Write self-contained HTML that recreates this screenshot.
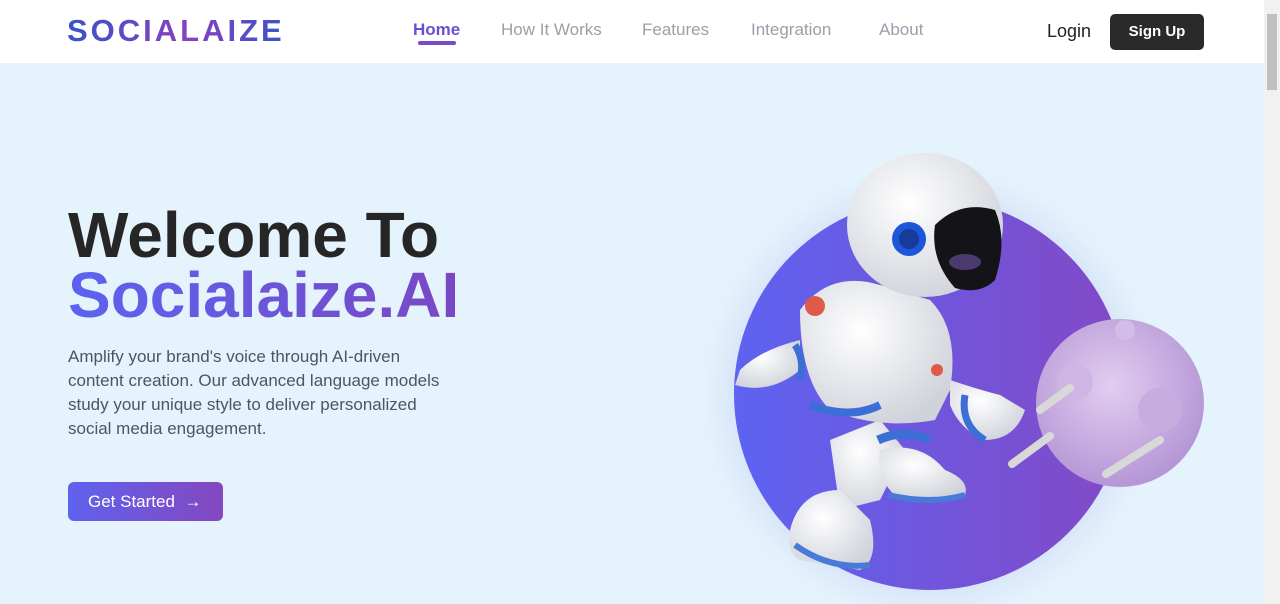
<!DOCTYPE html>
<html><head><meta charset="utf-8"><style>
*{margin:0;padding:0;box-sizing:border-box}
body{width:1280px;height:604px;overflow:hidden;background:#e5f4fc;font-family:"Liberation Sans",sans-serif;position:relative}
header{position:absolute;left:0;top:0;width:1264px;height:63px;background:#fff}
.logo{position:absolute;left:67px;top:13px;font-size:31px;font-weight:bold;letter-spacing:3px;background:linear-gradient(90deg,#3655c8,#8a3fc0 55%,#3a55c8);-webkit-background-clip:text;color:transparent;line-height:36px}
.nav a{position:absolute;top:19px;font-size:17px;color:#9aa0a8;text-decoration:none;line-height:22px}
.nav .home{color:#6b4fd0;font-weight:bold}
.ul{position:absolute;left:418px;top:41px;width:38px;height:4px;border-radius:2px;background:#7a4bc8}
.login{position:absolute;left:1047px;top:21px;font-size:18px;color:#222}
.signup{position:absolute;left:1110px;top:14px;width:94px;height:36px;border-radius:5px;background:#2a2a2a;color:#fff;font-weight:bold;font-size:15px;text-align:center;line-height:36px}
.sb{position:absolute;left:1264px;top:0;width:16px;height:604px;background:#f1f1f1}
.sb div{position:absolute;left:3px;top:14px;width:10px;height:76px;background:#c1c1c1;border-radius:1px}
h1{position:absolute;left:68px;top:205px;font-size:64px;line-height:60px;font-weight:bold;color:#262626;letter-spacing:0}
h1 span{background:linear-gradient(90deg,#5b63f0,#7a48c4);-webkit-background-clip:text;color:transparent}
p{position:absolute;left:68px;top:345px;width:520px;font-size:17px;line-height:24px;color:#4e5560}
.btn{position:absolute;left:68px;top:482px;width:155px;height:39px;border-radius:6px;background:linear-gradient(90deg,#5f62ee,#8448c0);color:#fff;font-size:17px;line-height:39px;padding-left:20px}
svg{position:absolute;left:0;top:0}
</style></head><body>
<header>
<div class="logo">SOCIALAIZE</div>
<div class="nav">
<a class="home" style="left:413px">Home</a>
<a style="left:501px">How It Works</a>
<a style="left:642px">Features</a>
<a style="left:751px">Integration</a>
<a style="left:879px">About</a>
</div>
<div class="ul"></div>
<div class="login">Login</div>
<div class="signup">Sign Up</div>
</header>
<div class="sb"><div></div></div>
<h1>Welcome To<br><span>Socialaize.AI</span></h1>
<p>Amplify your brand's voice through AI-driven<br>content creation. Our advanced language models<br>study your unique style to deliver personalized<br>social media engagement.</p>
<div class="btn">Get Started &nbsp;→</div>
<svg width="1264" height="604" viewBox="0 0 1264 604">
<defs>
<linearGradient id="cg" x1="0" x2="1"><stop offset="0" stop-color="#5d63f2"/><stop offset="1" stop-color="#8349c6"/></linearGradient>
<radialGradient id="mg" cx="0.45" cy="0.4" r="0.6"><stop offset="0" stop-color="#e2cdf0"/><stop offset="1" stop-color="#b596d6"/></radialGradient>
<radialGradient id="wg" cx="0.4" cy="0.35" r="0.7"><stop offset="0" stop-color="#fff"/><stop offset="1" stop-color="#cfd2da"/></radialGradient>
<filter id="bl"><feGaussianBlur stdDeviation="18"/></filter>
</defs>
<circle cx="930" cy="394" r="205" fill="#c8d2f5" opacity="0.6" filter="url(#bl)"/>
<circle cx="930" cy="394" r="196" fill="url(#cg)"/>
<circle cx="1120" cy="403" r="84" fill="url(#mg)"/>
<circle cx="1160" cy="410" r="22" fill="#c9acdf"/>
<circle cx="1075" cy="382" r="18" fill="#cfb5e3"/>
<circle cx="1125" cy="330" r="10" fill="#d3bce6"/>
<g stroke="#d8d8d8" stroke-width="8" stroke-linecap="round">
<line x1="1040" y1="410" x2="1070" y2="388"/>
<line x1="1012" y1="464" x2="1050" y2="436"/>
<line x1="1106" y1="474" x2="1160" y2="440"/>
</g>
<path d="M830 440 L880 420 L905 450 L880 500 L840 510 Z" fill="url(#wg)"/>
<path d="M790 530 Q800 490 840 490 L870 520 Q880 560 860 570 L800 560 Q785 550 790 530Z" fill="url(#wg)"/>
<path d="M795 545 Q830 570 870 565" stroke="#4a7ad8" stroke-width="6" fill="none"/>
<path d="M880 450 Q920 440 945 470 Q970 480 965 495 L900 500 Q875 480 880 450Z" fill="url(#wg)"/>
<path d="M888 495 Q930 505 965 495" stroke="#4a7ad8" stroke-width="6" fill="none"/>
<path d="M878 440 Q905 428 930 440" stroke="#3b6fd6" stroke-width="9" fill="none"/>
<path d="M800 310 Q830 270 880 285 L930 300 Q960 330 950 390 L935 420 Q880 430 830 410 Q800 380 800 310Z" fill="url(#wg)"/>
<path d="M810 405 Q850 420 880 405" stroke="#3b6fd6" stroke-width="8" fill="none"/>
<circle cx="815" cy="306" r="10" fill="#e05a4a"/>
<circle cx="937" cy="370" r="6" fill="#e05a4a"/>
<path d="M800 340 Q760 350 740 370 L735 385 Q770 395 800 370Z" fill="url(#wg)"/>
<path d="M795 345 Q805 360 800 380" stroke="#3b6fd6" stroke-width="7" fill="none"/>
<path d="M950 380 Q980 390 1000 395 L1025 410 Q1015 440 985 440 Q960 430 950 405Z" fill="url(#wg)"/>
<path d="M965 395 Q960 425 985 440" stroke="#3b6fd6" stroke-width="7" fill="none"/>
<ellipse cx="925" cy="225" rx="78" ry="72" fill="url(#wg)"/>
<path d="M935 225 Q960 200 995 210 Q1008 240 995 280 Q980 295 955 288 Q930 260 935 225Z" fill="#141418"/>
<ellipse cx="965" cy="262" rx="16" ry="8" fill="#4a3a6e"/>
<circle cx="909" cy="239" r="17" fill="#1d56d8"/>
<circle cx="909" cy="239" r="10" fill="#173b9a"/>
</svg>
</body></html>
